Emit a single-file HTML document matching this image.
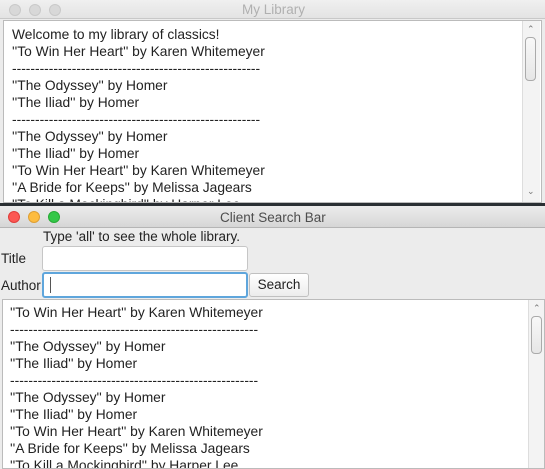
<!DOCTYPE html>
<html><head><style>
*{margin:0;padding:0;box-sizing:border-box}
body{width:545px;height:467px;overflow:hidden;background:#ececec;font-family:"Liberation Sans",sans-serif;font-size:13px;color:#222;position:relative}
.abs{position:absolute}
.tl{position:absolute;width:12px;height:12px;border-radius:50%}
.lines div{height:17px;line-height:17px;white-space:nowrap;font-size:13.8px}
.sb{position:absolute;background:#f3f3f3;border-left:1px solid #ddd}
.thumb{position:absolute;left:2px;width:11px;border:1px solid #aaa;border-radius:4px;background:linear-gradient(#f8f8f8,#e6e6e6)}
</style></head><body>
<div class="abs" style="left:0;top:0;width:545px;height:19px;background:linear-gradient(#f0f0f0,#e3e3e3);border-bottom:1px solid #c8c8c8"></div>
<div class="tl" style="left:9px;top:4px;background:#d8d8d8;border:1px solid #c9c9c9"></div>
<div class="tl" style="left:29px;top:4px;background:#d8d8d8;border:1px solid #c9c9c9"></div>
<div class="tl" style="left:49px;top:4px;background:#d8d8d8;border:1px solid #c9c9c9"></div>
<div class="abs" style="left:242px;top:2px;color:#b0b0b0;font-size:13.5px">My Library</div>
<div class="abs" style="left:3px;top:20px;width:539px;height:183px;background:#fff;border:1px solid #bbb;overflow:hidden">
 <div class="lines abs" style="left:8px;top:5px">
  <div>Welcome to my library of classics!</div>
  <div>''To Win Her Heart'' by Karen Whitemeyer</div>
  <div>------------------------------------------------------</div>
  <div>''The Odyssey'' by Homer</div>
  <div>''The Iliad'' by Homer</div>
  <div>------------------------------------------------------</div>
  <div>''The Odyssey'' by Homer</div>
  <div>''The Iliad'' by Homer</div>
  <div>''To Win Her Heart'' by Karen Whitemeyer</div>
  <div>''A Bride for Keeps'' by Melissa Jagears</div>
  <div>''To Kill a Mockingbird'' by Harper Lee</div>
 </div>
 <div class="sb" style="left:518px;top:0;width:18px;height:181px">
  <div class="abs" style="left:4px;top:3px;font-size:9px;color:#777">&#8963;</div>
  <div class="thumb" style="top:16px;height:44px"></div>
  <div class="abs" style="left:4px;top:165px;font-size:9px;color:#777">&#8964;</div>
 </div>
</div>
<div class="abs" style="left:0;top:203px;width:545px;height:3px;background:#2a2f33"></div>
<div class="abs" style="left:0;top:206px;width:545px;height:22px;background:linear-gradient(#ececec,#d6d6d6);border-bottom:1px solid #b5b5b5"></div>
<div class="tl" style="left:8px;top:211px;background:#fc5753;border:1px solid #df3d3a"></div>
<div class="tl" style="left:28px;top:211px;background:#fdbc40;border:1px solid #de9f34"></div>
<div class="tl" style="left:48px;top:211px;background:#33c748;border:1px solid #27aa35"></div>
<div class="abs" style="left:220px;top:210px;color:#4d4d4d;font-size:13.5px">Client Search Bar</div>
<div class="abs" style="left:43px;top:229px;font-size:13.5px">Type 'all' to see the whole library.</div>
<div class="abs" style="left:1px;top:251px;font-size:13.5px">Title</div>
<div class="abs" style="left:42px;top:246px;width:206px;height:25px;background:#fff;border:1px solid #c6c6c6;border-radius:3px"></div>
<div class="abs" style="left:1px;top:278px;font-size:13.5px">Author</div>
<div class="abs" style="left:42px;top:272px;width:206px;height:26px;background:#fff;border:2px solid #5fa6dc;border-radius:3px"></div>
<div class="abs" style="left:50px;top:277px;width:1px;height:16px;background:#555"></div>
<div class="abs" style="left:249px;top:273px;width:60px;height:24px;background:linear-gradient(#fff,#ececec);border:1px solid #c0c0c0;border-radius:3px;text-align:center;line-height:22px;font-size:13.5px">Search</div>
<div class="abs" style="left:2px;top:299px;width:543px;height:170px;background:#fff;border:1px solid #bbb;overflow:hidden">
 <div class="lines abs" style="left:7px;top:4px">
  <div>''To Win Her Heart'' by Karen Whitemeyer</div>
  <div>------------------------------------------------------</div>
  <div>''The Odyssey'' by Homer</div>
  <div>''The Iliad'' by Homer</div>
  <div>------------------------------------------------------</div>
  <div>''The Odyssey'' by Homer</div>
  <div>''The Iliad'' by Homer</div>
  <div>''To Win Her Heart'' by Karen Whitemeyer</div>
  <div>''A Bride for Keeps'' by Melissa Jagears</div>
  <div>''To Kill a Mockingbird'' by Harper Lee</div>
 </div>
 <div class="sb" style="left:525px;top:0;width:17px;height:170px">
  <div class="abs" style="left:4px;top:3px;font-size:9px;color:#777">&#8963;</div>
  <div class="thumb" style="top:16px;height:38px"></div>
 </div>
</div>
</body></html>
